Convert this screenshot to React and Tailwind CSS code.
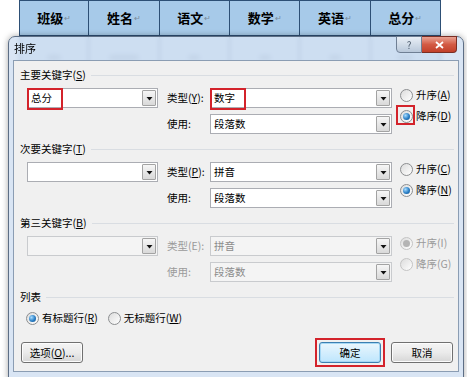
import React from 'react';

const headers = ['班级', '姓名', '语文', '数学', '英语', '总分'];
const ghostW = ['w-[14px]', 'w-[30px]', 'w-[12px]', 'w-[12px]', 'w-[12px]', 'w-[16px]'];

function Mn({ children }) {
  return <span className="underline underline-offset-1">{children}</span>;
}

function Arrow() {
  return (
    <svg width="7" height="7" viewBox="0 0 7 7">
      <path d="M0.5 2 H6.5 L3.5 5.5 Z" fill="#111" />
    </svg>
  );
}

function Combo({ wide, text, disabled, mark }) {
  return (
    <div
      className={`relative flex h-[20px] border ${wide ? 'w-[182px]' : 'w-[131px]'} ${
        disabled ? 'border-[#c9cbce] bg-[#f4f4f4] text-[#8c8c8c]' : 'border-[#abadb3] bg-white text-black'
      }`}
    >
      <div className="flex flex-1 items-center pl-[3px]">{text}</div>
      <div className="m-[1px] flex w-[14px] items-center justify-center rounded-[1px] border border-[#a3a3a3] bg-gradient-to-b from-[#f6f6f6] to-[#d9d9d9]">
        <Arrow />
      </div>
      {mark && (
        <div className="absolute -left-[1px] -top-[1px] h-[22px] w-[36px] border-2 border-[#d3232b]" />
      )}
    </div>
  );
}

function Radio({ checked, disabled, label, mark }) {
  return (
    <div className={`relative flex h-[14px] items-center ${disabled ? 'text-[#9a9a9a]' : 'text-black'}`}>
      <span
        className={`flex h-[13px] w-[13px] items-center justify-center rounded-full border bg-gradient-to-br from-[#dcdcdc] to-white ${
          disabled ? 'border-[#c4c4c4]' : 'border-[#8c8e90]'
        }`}
      >
        {checked && (
          <span
            className={`h-[7px] w-[7px] rounded-full ${
              disabled
                ? 'bg-[#b4b4b4]'
                : 'bg-[radial-gradient(circle_at_35%_35%,#a8dcff,#2a7fc6_55%,#0e4c86)]'
            }`}
          />
        )}
      </span>
      <span className="ml-[3px]">{label}</span>
      {mark && (
        <div className="absolute -left-[4px] -top-[4px] h-[20px] w-[19px] border-2 border-[#d3232b]" />
      )}
    </div>
  );
}

function Section({ title, d, type, use, up, down, upChecked, first, dMark }) {
  return (
    <div className="mb-[7px]">
      <div className="flex h-[16px] items-center">
        <span>{title}</span>
        <div className="ml-[5px] h-px flex-1 bg-[#d9dde2]" />
      </div>
      <div className="mt-[5px] flex">
        <div className="ml-[7px]">
          <div className="flex items-center">
            <Combo text={first?.text} mark={first?.mark} disabled={d} />
            <span className={`ml-[9px] w-[43px] ${d ? 'text-[#9a9a9a]' : ''}`}>{type.label}</span>
            <Combo wide text={type.text} mark={type.mark} disabled={d} />
          </div>
          <div className="mt-[6px] flex items-center">
            <span className={`ml-[140px] w-[43px] ${d ? 'text-[#9a9a9a]' : ''}`}>使用:</span>
            <Combo wide text={use} disabled={d} />
          </div>
        </div>
        <div className="ml-[8px] flex flex-col gap-[7px]">
          <Radio label={up} checked={upChecked} disabled={d} />
          <Radio label={down} checked={!upChecked && !d} disabled={d} mark={dMark} />
        </div>
      </div>
    </div>
  );
}

function Btn({ children, primary }) {
  return (
    <div
      className={`flex h-[21px] w-[62px] items-center justify-center rounded-[3px] border ${
        primary
          ? 'border-[#3c7fb1] bg-gradient-to-b from-[#eaf6fd] to-[#bee6fd] shadow-[inset_0_0_0_1px_#a6d8f5]'
          : 'border-[#707070] bg-gradient-to-b from-[#f4f4f4] via-[#ebebeb] to-[#d6d6d6] shadow-[inset_0_0_0_1px_#fcfcfc]'
      }`}
    >
      {children}
    </div>
  );
}

export default function App() {
  return (
    <div className="relative h-[377px] w-[467px] overflow-hidden bg-white font-['Noto_Sans_CJK_SC',sans-serif] text-[10.5px] text-black">
      {/* table behind */}
      <div className="ml-[19px] w-[422px] border-t border-[#2d4f75]">
        <div className="grid h-[34px] grid-cols-6 bg-[#a7cae9]">
          {headers.map((h, i) => (
            <div
              key={h}
              className={`flex items-center justify-center border-r border-[#2d4f75] text-[13px] font-bold ${
                i === 0 ? 'border-l' : ''
              }`}
            >
              {h}
              <span className="ml-px text-[8px] font-normal text-[#7a8a9a]">↵</span>
            </div>
          ))}
        </div>
        {/* blurred data row seen through the glass title bar */}
        <div className="grid h-[30px] grid-cols-6 border-t border-[#2d4f75] bg-[#c3dbf1]">
          {ghostW.map((w, i) => (
            <div
              key={i}
              className={`flex items-center justify-center border-r border-[#2d4f75] ${i === 0 ? 'border-l' : ''}`}
            >
              <div className={`mt-[14px] h-[5px] rounded-full bg-[#6f87a2]/60 blur-[1px] ${w}`} />
            </div>
          ))}
        </div>
      </div>

      {/* dialog */}
      <div className="absolute left-[8px] top-[36px] h-[345px] w-[456px] rounded-t-[7px] border border-[#5d6e85] bg-[#cfdff1]/80 px-[4px] shadow-[0_0_6px_rgba(0,0,0,0.35)] backdrop-blur-[2px]">
        <div className="relative flex h-[23px] items-center pl-[1px] text-[11px]">
          排序
          <div className="absolute -top-[1px] right-[2px] flex">
            <div className="flex h-[17px] w-[26px] items-center justify-center rounded-bl-[4px] border border-[#6f7f94] bg-gradient-to-b from-[#e9eff6] to-[#b9c8da] text-[10px] text-[#4b5a6b]">
              ?
            </div>
            <div className="flex h-[17px] w-[35px] items-center justify-center rounded-br-[4px] border border-l-0 border-[#7a2e24] bg-gradient-to-b from-[#e8a192] via-[#d35a44] to-[#c2402a]">
              <svg width="9" height="8" viewBox="0 0 9 8">
                <path d="M1 1 L8 7 M8 1 L1 7" stroke="#fff" strokeWidth="1.8" />
              </svg>
            </div>
          </div>
        </div>
        <div className="h-[312px] border border-[#8b9db3] bg-[#f0f0f0] pl-[6px] pr-[4px] pt-[6px]">
          <Section
            title={<>主要关键字(<Mn>S</Mn>)</>}
            first={{ text: '总分', mark: true }}
            type={{ label: <>类型(<Mn>Y</Mn>):</>, text: '数字', mark: true }}
            use="段落数"
            up={<>升序(<Mn>A</Mn>)</>}
            down={<>降序(<Mn>D</Mn>)</>}
            dMark
          />
          <Section
            title={<>次要关键字(<Mn>T</Mn>)</>}
            first={{ text: '' }}
            type={{ label: <>类型(<Mn>P</Mn>):</>, text: '拼音' }}
            use="段落数"
            up={<>升序(<Mn>C</Mn>)</>}
            down={<>降序(<Mn>N</Mn>)</>}
          />
          <Section
            title={<>第三关键字(<Mn>B</Mn>)</>}
            d
            first={{ text: '' }}
            type={{ label: '类型(E):', text: '拼音' }}
            use="段落数"
            up="升序(I)"
            down="降序(G)"
            upChecked
          />
          <div className="flex h-[16px] items-center">
            <span>列表</span>
            <div className="ml-[5px] h-px flex-1 bg-[#d9dde2]" />
          </div>
          <div className="ml-[6px] mt-[6px] flex gap-[10px]">
            <Radio checked label={<>有标题行(<Mn>R</Mn>)</>} />
            <Radio label={<>无标题行(<Mn>W</Mn>)</>} />
          </div>
          <div className="mt-[17px] flex items-center pr-[1px]">
            <div className="ml-[1px]">
              <Btn>
                选项(<Mn>O</Mn>)...
              </Btn>
            </div>
            <div className="ml-auto flex items-center gap-[10px]">
              <div className="relative">
                <Btn primary>确定</Btn>
                <div className="absolute -left-[4px] -top-[4px] h-[29px] w-[70px] border-2 border-[#d3232b]" />
              </div>
              <Btn>取消</Btn>
            </div>
          </div>
        </div>
      </div>
    </div>
  );
}
